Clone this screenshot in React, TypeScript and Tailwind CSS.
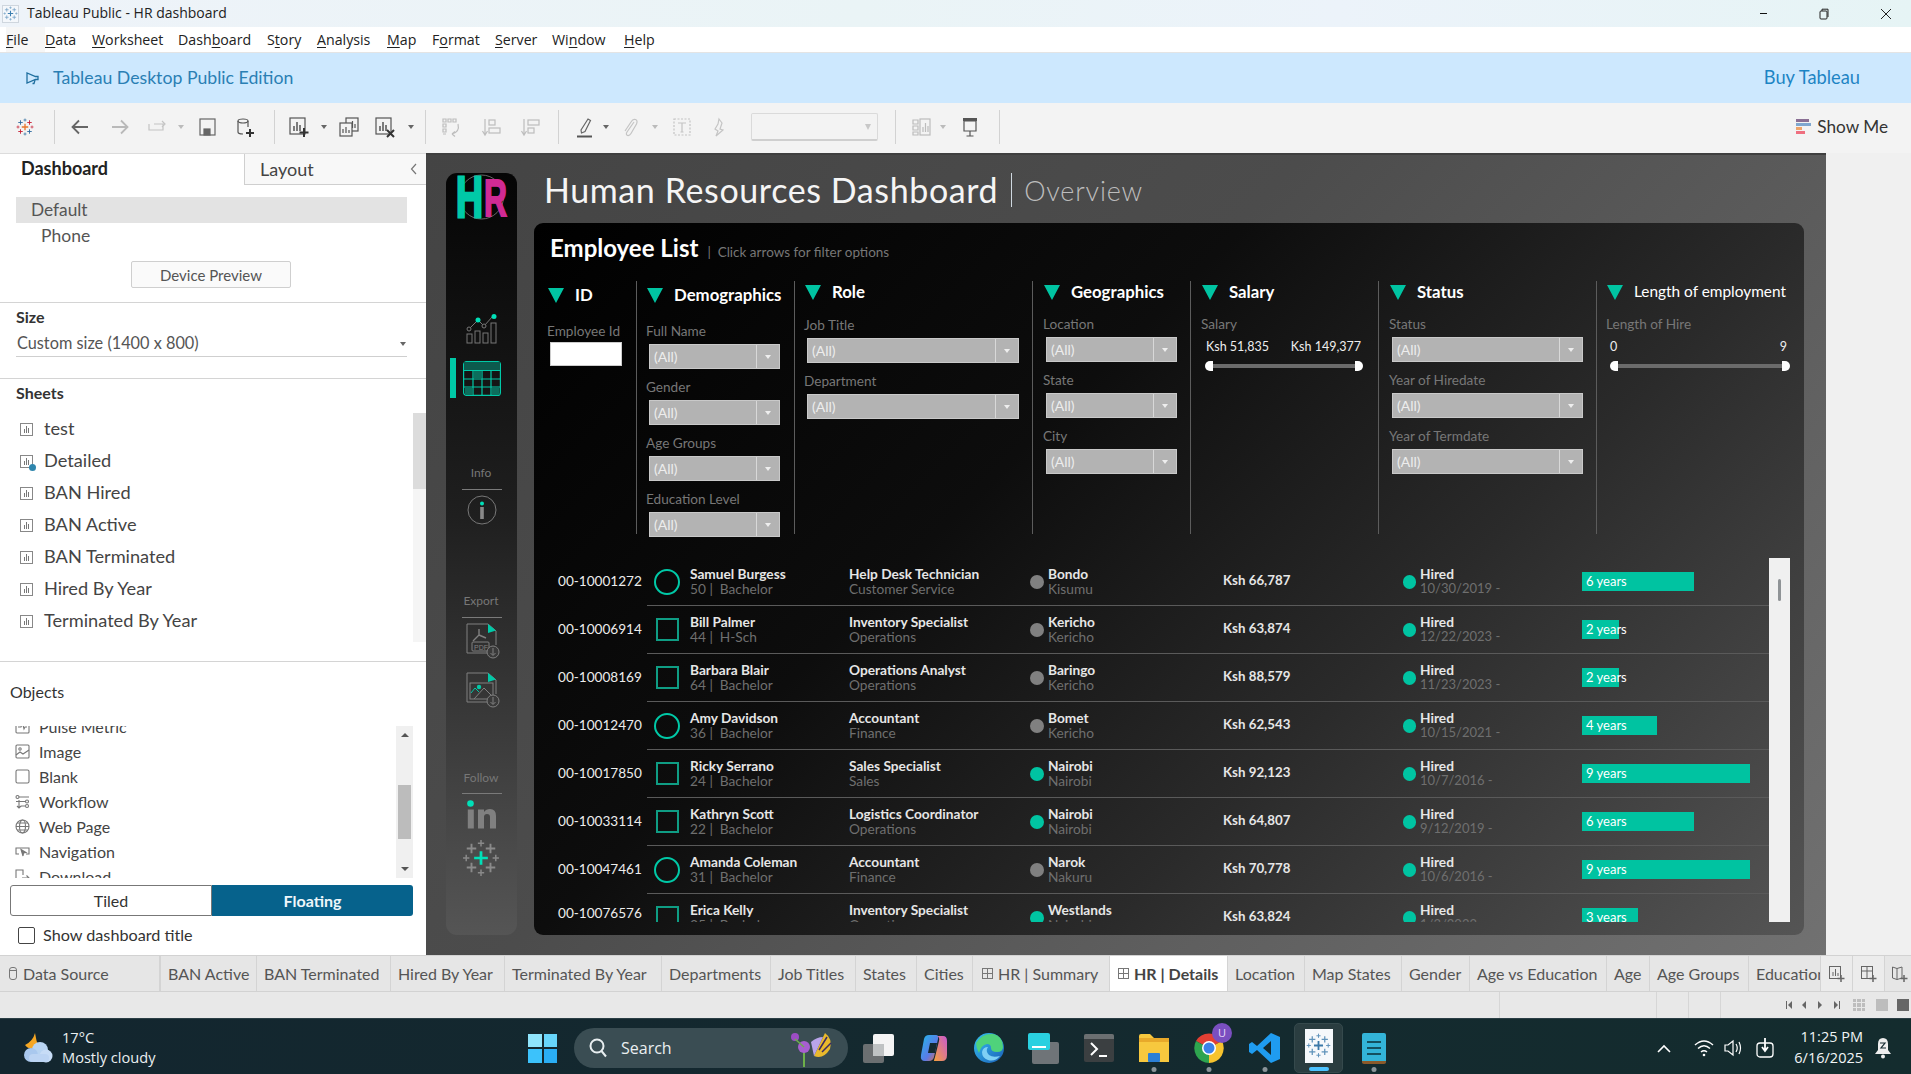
import React from "react";

const Cross = ({ x, y, r, c, w }: { x: number; y: number; r: number; c: string; w: number }) => (
  <path d={`M${x - r} ${y}H${x + r}M${x} ${y - r}V${y + r}`} stroke={c} strokeWidth={w} fill="none" />
);

const TableauMark = ({ size, center, a, b, className }: { size: number; center: string; a: string; b: string; className?: string }) => (
  <svg width={size} height={size} viewBox="0 0 36 36" className={className}>
    <Cross x={18} y={18} r={6.5} c={center} w={2.6} />
    <Cross x={9} y={9} r={4.5} c={a} w={1.8} />
    <Cross x={27} y={9} r={4.5} c={b} w={1.8} />
    <Cross x={9} y={27} r={4.5} c={b} w={1.8} />
    <Cross x={27} y={27} r={4.5} c={a} w={1.8} />
    <Cross x={18} y={4} r={3} c={a} w={1.4} />
    <Cross x={18} y={32} r={3} c={a} w={1.4} />
    <Cross x={4} y={18} r={3} c={b} w={1.4} />
    <Cross x={32} y={18} r={3} c={b} w={1.4} />
  </svg>
);

const Ico = ({ children, c = "#555", w = 22, h = 22, vb = "0 0 22 22" }: { children: React.ReactNode; c?: string; w?: number; h?: number; vb?: string }) => (
  <svg width={w} height={h} viewBox={vb} fill="none" stroke={c} strokeWidth={1.2}>
    {children}
  </svg>
);

const Slot = ({ className = "", children }: { className?: string; children?: React.ReactNode }) => (
  <div className={`w-[22px] h-[22px] flex items-center justify-center shrink-0 ${className}`}>{children}</div>
);
const Drop = ({ className = "", light }: { className?: string; light?: boolean }) => (
  <div className={`w-[8px] flex justify-center shrink-0 ${className}`}>
    <div className={`w-0 h-0 border-l-[3px] border-r-[3px] border-t-[4px] border-l-transparent border-r-transparent ${light ? "border-t-[#bbb]" : "border-t-[#666]"}`} />
  </div>
);
const Sep = ({ className = "" }: { className?: string }) => <div className={`w-px h-[34px] bg-[#d2d2d2] shrink-0 ${className}`} />;

const menus = [
  { a: "", u: "F", b: "ile", w: "w-[39px] bg-[#f6f6f6]" },
  { a: "", u: "D", b: "ata", w: "w-[47px]" },
  { a: "", u: "W", b: "orksheet", w: "w-[86px]" },
  { a: "Dash", u: "b", b: "oard", w: "w-[89px]" },
  { a: "S", u: "t", b: "ory", w: "w-[50px]" },
  { a: "", u: "A", b: "nalysis", w: "w-[70px]" },
  { a: "", u: "M", b: "ap", w: "w-[45px]" },
  { a: "F", u: "o", b: "rmat", w: "w-[63px]" },
  { a: "", u: "S", b: "erver", w: "w-[57px]" },
  { a: "Wi", u: "n", b: "dow", w: "w-[72px]" },
  { a: "", u: "H", b: "elp", w: "w-[50px]" },
];

const TitleBar = () => (
  <div className="h-[27px] flex items-center bg-[linear-gradient(90deg,#eef3f9,#eaf4f6_45%,#ecf3fa_70%,#e6f4f5)] font-['Open_Sans',sans-serif] text-[14px] text-[#222]">
    <div className="ml-[2px] w-[17px] h-[18px] bg-[#f4f7fb] border border-[#cfd6de] flex items-center justify-center">
      <TableauMark size={15} center="#3d7fb0" a="#6f9fc4" b="#6f9fc4" />
    </div>
    <span className="ml-[8px] leading-none mb-[2px]">Tableau Public - HR dashboard</span>
    <div className="ml-auto flex items-center">
      <div className="w-[7px] h-px bg-[#111] mr-[52px]" />
      <svg width="10" height="12" viewBox="0 0 10 12" fill="none" stroke="#222" strokeWidth="1" className="mr-[51px]">
        <rect x="1" y="3" width="7" height="8" rx="1" />
        <path d="M3 3V1.2H9V9" />
      </svg>
      <svg width="12" height="12" viewBox="0 0 12 12" stroke="#222" strokeWidth="1" className="mr-[19px]">
        <path d="M1 1L11 11M11 1L1 11" />
      </svg>
    </div>
  </div>
);

const MenuBar = () => (
  <div className="h-[26px] bg-white border-b border-[#e4e4e4] flex items-center font-['Open_Sans',sans-serif] text-[14.2px] text-[#222]">
    <div className="w-[6px] h-full" />
    {menus.map((m, i) => (
      <div key={i} className={`${m.w} h-full flex items-center whitespace-pre pt-px`}>
        {m.a}
        <u className="underline-offset-2">{m.u}</u>
        {m.b}
      </div>
    ))}
  </div>
);

const Banner = () => (
  <div className="h-[50px] bg-[#cde8fe] flex items-center font-[Lato,sans-serif] text-[17.7px] text-[#2a7fb4]">
    <svg width="14" height="14" viewBox="0 0 14 14" fill="none" stroke="#1f6f9f" strokeWidth="1.3" className="ml-[25px] -scale-x-100">
      <path d="M1 5.5V8.5H3.5L12 12V2L3.5 5.5H1Z" />
      <path d="M4 9L5 12.5H6.5" />
    </svg>
    <span className="ml-[14px]">Tableau Desktop Public Edition</span>
    <span className="ml-auto mr-[51px] text-[#1d84c4] text-[18.3px]">Buy Tableau</span>
  </div>
);

const Toolbar = () => (
  <div className="h-[50px] bg-[#f3f3f3] flex items-center pb-[2px]">
    <Slot className="ml-[14px]">
      <TableauMark size={18} center="#e8762d" a="#2d6a9f" b="#c72035" />
    </Slot>
    <Sep className="ml-[18px]" />
    <Slot className="ml-[14px]">
      <Ico c="#666"><path d="M19 11H4M10 4.5L3.5 11L10 17.5" strokeWidth="1.8" /></Ico>
    </Slot>
    <Slot className="ml-[18px]">
      <Ico c="#b9b9b9"><path d="M3 11H18M12 4.5L18.5 11L12 17.5" strokeWidth="1.8" /></Ico>
    </Slot>
    <Slot className="ml-[15px]">
      <Ico c="#c4c4c4"><path d="M3 8V14H17V8H8M16 5L19 8L16 11" strokeWidth="1.2" /></Ico>
    </Slot>
    <Drop className="ml-[9px]" light />
    <Slot className="ml-[11px]">
      <Ico c="#666"><rect x="4" y="3" width="15" height="16" /><rect x="8" y="13" width="6" height="6" fill="#666" /></Ico>
    </Slot>
    <Slot className="ml-[16px]">
      <Ico c="#555"><ellipse cx="9" cy="5" rx="5" ry="2" /><path d="M4 5V16Q4 18 9 18M14 5V11" /><path d="M16 13V21M12 17H20" stroke="#333" strokeWidth="2" /></Ico>
    </Slot>
    <Sep className="ml-[18px]" />
    <Slot className="ml-[13px]">
      <Ico c="#555"><rect x="2" y="2" width="15" height="16" /><path d="M6 15V10M9 15V6M12 15V9" strokeWidth="1.5" /><path d="M16 12V21M11.5 16.5H20.5" stroke="#333" strokeWidth="2" /></Ico>
    </Slot>
    <Drop className="ml-[10px]" />
    <Slot className="ml-[10px]">
      <Ico c="#555"><rect x="8" y="2" width="12" height="13" /><path d="M12 12V8M14.5 12V5M17 12V8" /><rect x="2" y="7" width="12" height="13" fill="#f3f3f3" /><path d="M5 17V13M8 17V11M11 17V14" /></Ico>
    </Slot>
    <Slot className="ml-[14px]">
      <Ico c="#555"><rect x="2" y="2" width="15" height="16" /><path d="M6 15V10M9 15V6M12 15V9" strokeWidth="1.5" /><path d="M13 14L20 21M20 14L13 21" stroke="#333" strokeWidth="2" /></Ico>
    </Slot>
    <Drop className="ml-[11px]" />
    <Sep className="ml-[10px]" />
    <Slot className="ml-[14px]">
      <Ico c="#bdbdbd"><path d="M3 3H6V6H3ZM8 3H11V6H8ZM13 3H16V6H13ZM3 8H6V11H3ZM3 13H6V16H3ZM3 18H6" /><path d="M18 8Q20 16 12 18M12 18L15 15.5M12 18L15 20.5" /></Ico>
    </Slot>
    <Slot className="ml-[18px]">
      <Ico c="#bdbdbd"><path d="M5 3V18M2.5 15L5 19L7.5 15" /><rect x="9" y="4" width="6" height="5" /><rect x="9" y="12" width="11" height="5" /></Ico>
    </Slot>
    <Slot className="ml-[17px]">
      <Ico c="#bdbdbd"><path d="M5 3V18M2.5 15L5 19L7.5 15" /><rect x="9" y="4" width="11" height="5" /><rect x="9" y="12" width="6" height="5" /></Ico>
    </Slot>
    <Sep className="ml-[17px]" />
    <Slot className="ml-[15px]">
      <Ico c="#666"><path d="M7 14L14 3L16.5 4.5L11 15.5L7.5 17Z" /><path d="M3 20.5H18" stroke="#555" strokeWidth="2" /></Ico>
    </Slot>
    <Drop className="ml-[6px]" />
    <Slot className="ml-[9px]">
      <Ico c="#c4c4c4"><path d="M15 6L8 16Q6.5 18.5 8.5 19.5Q10.5 20 12 17.5L17.5 8Q19 4.5 16.5 3.5Q14 2.5 12 6L6 15" /></Ico>
    </Slot>
    <Drop className="ml-[10px]" light />
    <Slot className="ml-[12px]">
      <Ico c="#c4c4c4"><rect x="3" y="3" width="16" height="16" strokeDasharray="2 1.5" /><path d="M7 7H15M11 7V16M9.5 16H12.5" /></Ico>
    </Slot>
    <Slot className="ml-[15px]">
      <Ico c="#c4c4c4"><path d="M11 3L14 7L12 13L15 14L8 20L10 15L7 13L10 8Z" /></Ico>
    </Slot>
    <div className="ml-[21px] w-[127px] h-[28px] border border-[#dadada] border-b-2 border-b-[#cfcfcf] rounded-[2px] flex items-center justify-end pr-[6px]">
      <div className="w-0 h-0 border-l-[3.5px] border-r-[3.5px] border-t-[6px] border-l-transparent border-r-transparent border-t-[#c8c8c8]" />
    </div>
    <Sep className="ml-[17px]" />
    <Slot className="ml-[15px]">
      <Ico c="#bcbcbc"><path d="M2 4H7V8H2ZM2 10H7V14H2ZM2 16H7V19H2Z" /><rect x="9" y="3" width="10" height="16" /><path d="M12 16V11M14.5 16V7M17 16V10" /></Ico>
    </Slot>
    <Drop className="ml-[6px]" light />
    <Slot className="ml-[12px]">
      <Ico c="#555"><path d="M5 5H17V15H5Z" /><path d="M4 3.5H18" stroke="#555" strokeWidth="3" /><path d="M11 15V20M7.5 20H14.5" /></Ico>
    </Slot>
    <Sep className="ml-[18px]" />
    <div className="ml-auto mr-[23px] flex items-center">
      <div className="flex flex-col w-[15px] gap-px">
        <div className="h-[3px] w-[13px] bg-[#8a6f94]" />
        <div className="h-[3px] w-[15px] bg-[#7fa7cf]" />
        <div className="h-[3px] w-[6px] bg-[#eda46a]" />
        <div className="h-[3px] w-[9px] bg-[#ef6f7f]" />
      </div>
      <span className="ml-[6px] font-[Lato,sans-serif] text-[17.2px] text-[#333]">Show Me</span>
    </div>
  </div>
);

const SheetIcon = ({ check }: { check?: boolean }) => (
  <div className="relative w-[13px] h-[13px] border border-[#888] bg-white flex items-end justify-center gap-px pb-[2px] shrink-0">
    <div className="w-px h-[4px] bg-[#777]" />
    <div className="w-px h-[7px] bg-[#777]" />
    <div className="w-px h-[5px] bg-[#777]" />
    {check && <div className="absolute -right-[4px] -bottom-[4px] w-[7px] h-[7px] rounded-full bg-[#2f86ad]" />}
  </div>
);

const sheets = ["test", "Detailed", "BAN Hired", "BAN Active", "BAN Terminated", "Hired By Year", "Terminated By Year"];

const ObjIcon = ({ kind }: { kind: string }) => (
  <svg width="15" height="15" viewBox="0 0 15 15" fill="none" stroke="#777" strokeWidth="1.1" className="shrink-0">
    {kind === "pulse" && <><rect x="1" y="1" width="13" height="13" rx="1" /><path d="M3 8H6L7.5 4L9 10L10 8H12" /></>}
    {kind === "image" && <><rect x="1" y="1" width="13" height="13" rx="1" /><circle cx="5" cy="5" r="1.2" /><path d="M1 11L5 8L8 10L14 6" /></>}
    {kind === "blank" && <rect x="1" y="1" width="13" height="13" rx="1.5" />}
    {kind === "flow" && <><circle cx="2.5" cy="3" r="1.5" /><circle cx="12" cy="7.5" r="1.5" /><circle cx="12" cy="12" r="1.5" /><path d="M4 3H14M1 7.5H10M6 12H10M4 6V14M2 12L4 14L6 12" /></>}
    {kind === "web" && <><circle cx="7.5" cy="7.5" r="6.5" /><ellipse cx="7.5" cy="7.5" rx="3" ry="6.5" /><path d="M1 7.5H14M2 4H13M2 11H13" /></>}
    {kind === "nav" && <><path d="M4 10H1V4H14V10H11" /><path d="M6 5.5L11 8.5L8.5 9L8 12Z" fill="#777" /></>}
    {kind === "down" && <><path d="M8 14H1V1H8V6" /><path d="M7 9H14M11.5 6.5L14 9L11.5 11.5" /></>}
  </svg>
);

const objects = [
  { k: "pulse", t: "Pulse Metric" },
  { k: "image", t: "Image" },
  { k: "blank", t: "Blank" },
  { k: "flow", t: "Workflow" },
  { k: "web", t: "Web Page" },
  { k: "nav", t: "Navigation" },
  { k: "down", t: "Download" },
];

const LeftPanel = () => (
  <div className="w-[426px] shrink-0 h-full bg-white flex flex-col border-t border-[#dcdcdc] font-[Lato,sans-serif] text-[#444] overflow-hidden">
    <div className="h-[31px] flex shrink-0">
      <div className="w-[244px] pl-[21px] pb-[2px] flex items-center font-bold text-[18px] text-[#222]">Dashboard</div>
      <div className="flex-1 bg-[#f8f8f8] border-l border-b border-[#cfcfcf] flex items-center pl-[15px] text-[18px] text-[#444]">
        Layout
        <svg width="8" height="12" viewBox="0 0 8 12" fill="none" stroke="#777" strokeWidth="1.2" className="ml-auto mr-[8px]"><path d="M6 1L1.5 6L6 11" /></svg>
      </div>
    </div>
    <div className="mt-[12px] ml-[16px] w-[391px] h-[26px] bg-[#e3e3e3] flex items-center pl-[15px] text-[17.3px] text-[#555] shrink-0">Default</div>
    <div className="ml-[41px] h-[26px] flex items-center text-[17.5px] text-[#555] shrink-0">Phone</div>
    <div className="mt-[12px] ml-[131px] w-[160px] h-[27px] pt-px bg-[#fafafa] border border-[#cfcfcf] rounded-[2px] flex items-center justify-center text-[15px] text-[#555] shrink-0">Device Preview</div>
    <div className="mt-[14px] h-px bg-[#d4d4d4] shrink-0" />
    <div className="mt-[3px] ml-[16px] h-[22px] flex items-center font-bold text-[16px] text-[#333] shrink-0">Size</div>
    <div className="mt-[4px] ml-[16px] w-[391px] h-[25px] pb-px border-b border-[#cfcfcf] flex items-center text-[16.3px] text-[#555] shrink-0">
      <span className="ml-px">Custom size (1400 x 800)</span>
      <div className="ml-auto mr-[1px] w-0 h-0 border-l-[3.5px] border-r-[3.5px] border-t-[4px] border-l-transparent border-r-transparent border-t-[#666]" />
    </div>
    <div className="mt-[21px] h-px bg-[#d4d4d4] shrink-0" />
    <div className="mt-[3px] ml-[16px] h-[22px] flex items-center font-bold text-[16px] text-[#333] shrink-0">Sheets</div>
    <div className="mt-[9px] h-[229px] flex shrink-0">
      <div className="flex-1 flex flex-col">
        {sheets.map((s, i) => (
          <div key={s} className="h-[32px] flex items-center pl-[20px]">
            <SheetIcon check={i === 1} />
            <span className="ml-[11px] text-[18.2px] text-[#444]">{s}</span>
          </div>
        ))}
      </div>
      <div className="w-[13px] bg-[#f5f5f5]">
        <div className="h-[76px] bg-[#dcdcdc]" />
      </div>
    </div>
    <div className="mt-[19px] h-px bg-[#d4d4d4] shrink-0" />
    <div className="mt-[19px] ml-[10px] h-[22px] flex items-center font-normal text-[16px] text-[#333] shrink-0">Objects</div>
    <div className="mt-[23px] h-[152px] flex shrink-0">
      <div className="w-[396px] h-[152px] overflow-hidden flex flex-col">
        <div className="-mt-[12px]" />
        {objects.map((o) => (
          <div key={o.k} className="h-[25px] flex items-center pl-[15px] shrink-0">
            <ObjIcon kind={o.k} />
            <span className="ml-[9px] text-[16px] text-[#444]">{o.t}</span>
          </div>
        ))}
      </div>
      <div className="w-[17px] bg-[#f0f0f0] flex flex-col items-center">
        <div className="mt-[7px] w-0 h-0 border-l-[4px] border-r-[4px] border-b-[4px] border-l-transparent border-r-transparent border-b-[#555]" />
        <div className="mt-[48px] w-[13px] h-[54px] bg-[#bcbcbc]" />
        <div className="mt-[28px] w-0 h-0 border-l-[4px] border-r-[4px] border-t-[4px] border-l-transparent border-r-transparent border-t-[#555]" />
      </div>
    </div>
    <div className="mt-[7px] ml-[10px] w-[403px] h-[31px] flex shrink-0">
      <div className="w-[202px] border border-[#777] rounded-l-[3px] flex items-center justify-center text-[16px] text-[#333]">Tiled</div>
      <div className="flex-1 bg-[#06628c] rounded-r-[3px] flex items-center justify-center text-[16px] font-bold text-[#eef6fa]">Floating</div>
    </div>
    <div className="mt-[7px] ml-[18px] flex items-center shrink-0">
      <div className="w-[17px] h-[17px] border border-[#444] rounded-[2px]" />
      <span className="ml-[8px] text-[16.2px] text-[#333]">Show dashboard title</span>
    </div>
  </div>
);

const SideLabel = ({ t, className }: { t: string; className: string }) => (
  <div className={`h-[16px] flex items-center justify-center text-[12px] text-[#777] ${className}`}>{t}</div>
);
const SideLine = ({ className }: { className: string }) => <div className={`mx-auto w-[40px] h-px bg-[#7a7a7a] ${className}`} />;

const Sidebar = () => (
  <div className="w-[71px] h-[762px] shrink-0 rounded-[11px] bg-[linear-gradient(180deg,#050505,#1f1f1f_45%,#555_100%)] flex flex-col items-stretch">
    <svg width="71" height="48" viewBox="0 0 71 48" className="mt-[1px] shrink-0">
      <circle cx="35.5" cy="23" r="22" fill="none" stroke="#666" strokeWidth="1" />
      <text x="10" y="43" fontFamily="'Liberation Sans',sans-serif" fontWeight="700" fontSize="58" fill="#00c9a7" stroke="#00c9a7" strokeWidth="3" textLength="27" lengthAdjust="spacingAndGlyphs">H</text>
      <text x="38" y="42" fontFamily="'Liberation Sans',sans-serif" fontWeight="700" fontSize="52" fill="#d02a94" stroke="#d02a94" strokeWidth="2" textLength="23" lengthAdjust="spacingAndGlyphs">R</text>
    </svg>
    <svg width="32" height="30" viewBox="0 0 32 30" fill="none" stroke="#777" strokeWidth="1" className="mt-[92px] ml-[20px] shrink-0">
      <rect x="1" y="20" width="5" height="9" />
      <rect x="9" y="17" width="5" height="12" />
      <rect x="17" y="19" width="5" height="10" />
      <rect x="25" y="9" width="5" height="20" />
      <path d="M3 15L12 6L18 12L27 2" />
      <circle cx="3" cy="15" r="2" fill="#111" />
      <circle cx="18" cy="12" r="2" fill="#111" />
      <circle cx="12" cy="6" r="2.5" fill="#00e0b8" stroke="none" />
      <circle cx="28" cy="2.5" r="2.5" fill="#00e0b8" stroke="none" />
    </svg>
    <div className="mt-[14px] h-[40px] flex items-center shrink-0">
      <div className="ml-[4px] w-[6px] h-[40px] bg-[#00c9a7]" />
      <svg width="38" height="35" viewBox="0 0 38 35" fill="none" stroke="#00c9a7" strokeWidth="1.2" className="ml-[7px]">
        <rect x="0.6" y="0.6" width="36.8" height="33.8" rx="3" />
        <rect x="1" y="1" width="36" height="8" fill="#0c5a4d" stroke="none" />
        <path d="M1 9.5H37M1 18H37M1 26H37M10 9.5V34M19 9.5V34M28 9.5V34" />
        <rect x="11" y="10" width="7.5" height="7.5" fill="#0c6e5d" stroke="none" />
        <rect x="2" y="27" width="7.5" height="7" fill="#0c6e5d" stroke="none" />
        <rect x="29" y="27" width="7.5" height="7" fill="#0c6e5d" stroke="none" />
      </svg>
    </div>
    <SideLabel t="Info" className="mt-[67px] shrink-0 pr-px" />
    <SideLine className="mt-[8px] shrink-0" />
    <svg width="30" height="30" viewBox="0 0 30 30" fill="none" className="mt-[5px] mx-auto shrink-0">
      <circle cx="15" cy="15" r="14" stroke="#777" strokeWidth="1" />
      <circle cx="15" cy="8.5" r="2" fill="#00e0b8" />
      <rect x="13.2" y="12" width="3.6" height="12" fill="#888" />
    </svg>
    <SideLabel t="Export" className="mt-[68px] shrink-0 pr-px" />
    <SideLine className="mt-[8px] shrink-0" />
    <svg width="34" height="36" viewBox="0 0 34 36" fill="none" stroke="#808080" strokeWidth="1" className="mt-[5px] ml-[20px] shrink-0">
      <path d="M23 30H1V1H22L30 8V22" />
      <path d="M22 1L30 7.5L22 10Z" fill="#00c9a7" stroke="none" />
      <path d="M13 6V12L7 18M13 12L20 15" strokeWidth="1.4" />
      <rect x="6" y="19" width="17" height="9" rx="1" />
      <text x="8" y="27" fontSize="7" fontFamily="'Liberation Sans',sans-serif" stroke="none" fill="#808080">PDF</text>
      <circle cx="27" cy="29" r="6" fill="#3a3a3a" />
      <path d="M27 25V32M24.5 30L27 32.5L29.5 30" />
    </svg>
    <svg width="34" height="36" viewBox="0 0 34 36" fill="none" stroke="#808080" strokeWidth="1" className="mt-[13px] ml-[20px] shrink-0">
      <path d="M23 30H1V1H22L30 8V22" />
      <path d="M22 1L30 7.5L22 10Z" fill="#00c9a7" stroke="none" />
      <rect x="4" y="11" width="23" height="16" />
      <circle cx="13" cy="15" r="2.2" fill="#00c9a7" stroke="none" />
      <path d="M5 21L9 16L13 20" stroke="#00c9a7" />
      <path d="M8 27L18 16L27 25" />
      <circle cx="27" cy="29" r="6" fill="#3a3a3a" />
      <path d="M27 25V32M24.5 30L27 32.5L29.5 30" />
    </svg>
    <SideLabel t="Follow" className="mt-[62px] shrink-0 pr-px" />
    <SideLine className="mt-[7px] shrink-0" />
    <svg width="30" height="29" viewBox="0 0 30 29" className="mt-[6px] ml-[21px] shrink-0">
      <circle cx="3.5" cy="3.5" r="3.3" fill="#00e0b8" />
      <rect x="0.8" y="9.5" width="6" height="19" fill="#808080" />
      <path d="M11 9.5H17V12Q19 9 23 9Q29 9 29 16V28.5H23V17Q23 14 20 14Q17 14 17 17V28.5H11Z" fill="#808080" />
    </svg>
    <TableauMark size={38} center="#00e0b8" a="#8a8a8a" b="#8a8a8a" className="mt-[10px] ml-[16px] shrink-0" />
  </div>
);

const Tri = () => <div className="w-0 h-0 border-l-[8px] border-r-[8px] border-t-[15px] border-l-transparent border-r-transparent border-t-[#00c4a2] shrink-0" />;

const Head = ({ t, className = "", small }: { t: string; className?: string; small?: boolean }) => (
  <div className={`h-[22px] flex items-center ml-px ${className}`}>
    <Tri />
    <span className={`ml-[11px] whitespace-nowrap text-white ${small ? "text-[15.4px]" : "text-[16.8px] font-bold"}`}>{t}</span>
  </div>
);

const Sel = ({ w }: { w: string }) => (
  <div className={`ml-[3px] mt-[4px] h-[25px] bg-[#b3b3b3] border border-[#c9c9c9] flex items-center pl-[4px] text-[14px] text-[#ededed] ${w}`}>
    (All)
    <div className="ml-auto w-[23px] h-full border-l border-[#d8d8d8] flex items-center justify-center">
      <div className="w-0 h-0 border-l-[3.5px] border-r-[3.5px] border-t-[4px] border-l-transparent border-r-transparent border-t-[#eee]" />
    </div>
  </div>
);
const Lbl = ({ t }: { t: string }) => <div className="h-[16px] pb-[2px] flex items-center text-[13.6px] text-[#777] whitespace-nowrap">{t}</div>;

const Group = ({ items, w, className }: { items: string[]; w: string; className: string }) => (
  <div className={`flex flex-col gap-[11px] ${className}`}>
    {items.map((t) => (
      <div key={t}>
        <Lbl t={t} />
        <Sel w={w} />
      </div>
    ))}
  </div>
);

const Slider = ({ className }: { className: string }) => (
  <div className={`flex items-center h-[10px] ${className}`}>
    <div className="w-[8px] h-[10px] rounded-l-full bg-white" />
    <div className="flex-1 h-[4px] bg-[#6b6b6b]" />
    <div className="w-[8px] h-[10px] rounded-r-full bg-white" />
  </div>
);

const Filters = () => (
  <div className="mt-[20px] h-[257px] flex shrink-0 text-white">
    <div className="w-[102px] h-[253px] pl-[13px] pt-[3px] shrink-0">
      <Head t="ID" />
      <div className="mt-[18px]"><Lbl t="Employee Id" /></div>
      <div className="ml-[3px] mt-[2px] w-[72px] h-[24px] bg-white border border-[#ccc]" />
    </div>
    <div className="w-[158px] h-[253px] border-l border-[#5c5c5c] pl-[9px] pt-[3px] shrink-0">
      <Head t="Demographics" />
      <Group className="mt-[18px]" w="w-[131px]" items={["Full Name", "Gender", "Age Groups", "Education Level"]} />
    </div>
    <div className="w-[238px] h-[253px] border-l border-[#5c5c5c] pl-[9px] shrink-0">
      <Head t="Role" />
      <Group className="mt-[15px]" w="w-[212px]" items={["Job Title", "Department"]} />
    </div>
    <div className="w-[158px] h-[253px] border-l border-[#5c5c5c] pl-[10px] shrink-0">
      <Head t="Geographics" />
      <Group className="mt-[14px]" w="w-[131px]" items={["Location", "State", "City"]} />
    </div>
    <div className="w-[188px] h-[253px] border-l border-[#5c5c5c] pl-[10px] shrink-0">
      <Head t="Salary" />
      <div className="mt-[14px]"><Lbl t="Salary" /></div>
      <div className="mt-[6px] ml-[5px] w-[155px] h-[16px] flex items-center justify-between text-[12.5px] text-[#eee]">
        <span>Ksh 51,835</span>
        <span>Ksh 149,377</span>
      </div>
      <Slider className="mt-[6px] ml-[4px] w-[158px]" />
    </div>
    <div className="w-[218px] h-[253px] border-l border-[#5c5c5c] pl-[10px] shrink-0">
      <Head t="Status" />
      <Group className="mt-[14px]" w="w-[191px]" items={["Status", "Year of Hiredate", "Year of Termdate"]} />
    </div>
    <div className="w-[208px] h-[253px] border-l border-[#5c5c5c] pl-[9px] shrink-0">
      <Head t="Length of employment" small />
      <div className="mt-[14px]"><Lbl t="Length of Hire" /></div>
      <div className="mt-[6px] ml-[4px] w-[177px] h-[16px] flex items-center justify-between text-[12.5px] text-[#eee]">
        <span>0</span>
        <span>9</span>
      </div>
      <Slider className="mt-[6px] ml-[4px] w-[180px]" />
    </div>
  </div>
);

type Row = {
  id: string; round: boolean; name: string; age: string; edu: string; job: string; dept: string;
  loc: string; sub: string; on: boolean; sal: string; date: string; yrs: number; bar: string;
};
const rows: Row[] = [
  { id: "00-10001272", round: true, name: "Samuel Burgess", age: "50", edu: "Bachelor", job: "Help Desk Technician", dept: "Customer Service", loc: "Bondo", sub: "Kisumu", on: false, sal: "Ksh 66,787", date: "10/30/2019 -", yrs: 6, bar: "w-[112px]" },
  { id: "00-10006914", round: false, name: "Bill Palmer", age: "44", edu: "H-Sch", job: "Inventory Specialist", dept: "Operations", loc: "Kericho", sub: "Kericho", on: false, sal: "Ksh 63,874", date: "12/22/2023 -", yrs: 2, bar: "w-[37px]" },
  { id: "00-10008169", round: false, name: "Barbara Blair", age: "64", edu: "Bachelor", job: "Operations Analyst", dept: "Operations", loc: "Baringo", sub: "Kericho", on: false, sal: "Ksh 88,579", date: "11/23/2023 -", yrs: 2, bar: "w-[37px]" },
  { id: "00-10012470", round: true, name: "Amy Davidson", age: "36", edu: "Bachelor", job: "Accountant", dept: "Finance", loc: "Bomet", sub: "Kericho", on: false, sal: "Ksh 62,543", date: "10/15/2021 -", yrs: 4, bar: "w-[75px]" },
  { id: "00-10017850", round: false, name: "Ricky Serrano", age: "24", edu: "Bachelor", job: "Sales Specialist", dept: "Sales", loc: "Nairobi", sub: "Nairobi", on: true, sal: "Ksh 92,123", date: "10/7/2016 -", yrs: 9, bar: "w-[168px]" },
  { id: "00-10033114", round: false, name: "Kathryn Scott", age: "22", edu: "Bachelor", job: "Logistics Coordinator", dept: "Operations", loc: "Nairobi", sub: "Nairobi", on: true, sal: "Ksh 64,807", date: "9/12/2019 -", yrs: 6, bar: "w-[112px]" },
  { id: "00-10047461", round: true, name: "Amanda Coleman", age: "31", edu: "Bachelor", job: "Accountant", dept: "Finance", loc: "Narok", sub: "Nakuru", on: false, sal: "Ksh 70,778", date: "10/6/2016 -", yrs: 9, bar: "w-[168px]" },
  { id: "00-10076576", round: false, name: "Erica Kelly", age: "35", edu: "Bachelor", job: "Inventory Specialist", dept: "Operations", loc: "Westlands", sub: "Nairobi", on: true, sal: "Ksh 63,824", date: "1/3/2022 -", yrs: 3, bar: "w-[56px]" },
];

const Two = ({ a, b, className, subClass = "text-[13.7px]" }: { a: string; b: string; className: string; subClass?: string }) => (
  <div className={`flex flex-col mb-[2px] shrink-0 ${className}`}>
    <span className="h-[15px] leading-[15px] text-[13.7px] font-bold text-[#e6e6e6] whitespace-nowrap">{a}</span>
    <span className={`h-[15px] leading-[15px] text-[#6f6f6f] whitespace-pre ${subClass}`}>{b}</span>
  </div>
);

const TableRow = ({ r, last }: { r: Row; last: boolean }) => (
  <div className="h-[48px] flex items-center shrink-0">
    <div className={`w-[113px] pl-[24px] text-[13.6px] text-[#ececec] shrink-0 ${last ? "pb-[9px]" : "pb-px"}`}>{r.id}</div>
    <div className="flex-1 h-full flex items-center border-b border-[#5a5a5a]">
      <div className="w-[43px] pl-[7px] shrink-0">
        {r.round ? (
          <div className="w-[26px] h-[26px] rounded-full border-2 border-[#00c9a7]" />
        ) : (
          <div className="ml-[2px] w-[23px] h-[23px] border-2 border-[#0f9d84]" />
        )}
      </div>
      <Two className="w-[159px]" a={r.name} b={`${r.age} |  ${r.edu}`} />
      <Two className="w-[181px]" a={r.job} b={r.dept} />
      <div className={`w-[14px] h-[14px] rounded-full mr-[4px] shrink-0 ${r.on ? "bg-[#00c4a2]" : "bg-[#808080]"}`} />
      <Two className="w-[175px]" a={r.loc} b={r.sub} />
      <div className="w-[180px] pb-px text-[13.3px] font-bold text-[#e6e6e6] shrink-0">{r.sal}</div>
      <div className="w-[13px] h-[14px] rounded-full bg-[#00c4a2] mr-[4px] shrink-0" />
      <Two className="w-[162px]" a="Hired" b={r.date} subClass="text-[13px]" />
      <div className="relative h-[19px] flex-1">
        <div className={`h-full bg-[#00c3a1] ${r.bar}`} />
        <span className="absolute left-[4px] top-0 leading-[19px] text-[13px] text-white">{r.yrs} years</span>
      </div>
    </div>
  </div>
);

const Card = () => (
  <div className="w-[1270px] h-[712px] rounded-[9px] bg-[linear-gradient(135deg,#000_0%,#0d0d0d_36%,#2a2a2a_64%,#555_100%)] flex flex-col overflow-hidden">
    <div className="mt-[12px] h-[26px] pl-[16px] flex items-baseline shrink-0 whitespace-pre">
      <span className="text-[24px] font-bold text-white leading-[26px]">Employee List</span>
      <span className="ml-[9px] text-[13.5px] text-[#777]">|  Click arrows for filter options</span>
    </div>
    <Filters />
    <div className="mt-[20px] h-[364px] flex shrink-0 overflow-hidden">
      <div className="w-[1235px] flex flex-col">
        {rows.map((r, i) => (
          <TableRow key={r.id} r={r} last={i === rows.length - 1} />
        ))}
      </div>
      <div className="w-[21px] bg-[#f0f0f0] shrink-0 pl-[9px] pt-[21px]">
        <div className="w-[3px] h-[22px] rounded-full bg-[#8f9396]" />
      </div>
    </div>
  </div>
);

const Canvas = () => (
  <div className="w-[1400px] h-full shrink-0 flex pl-[20px] pt-[20px] gap-[17px] border-t-2 border-[#3f3f3f] bg-[linear-gradient(135deg,#444_0%,#4c4c4c_40%,#717171_100%)] font-[Lato,sans-serif]">
    <div className="-mt-[2px]"><Sidebar /></div>
    <div className="flex flex-col -mt-[2px]">
      <div className="h-[50px] pb-[17px] flex items-center whitespace-nowrap shrink-0">
        <span className="ml-[10px] text-[34px] tracking-[0.6px] text-[#f5f5f5] leading-none">Human Resources Dashboard</span>
        <div className="ml-[13px] w-px h-[34px] bg-[#cfd8e0]" />
        <span className="ml-[12px] text-[27px] text-[#bdbdbd] tracking-[0.8px] font-light mt-[3px]">Overview</span>
      </div>
      <Card />
    </div>
  </div>
);

const tabs = [
  { t: "BAN Active", w: "w-[96px]" },
  { t: "BAN Terminated", w: "w-[134px]" },
  { t: "Hired By Year", w: "w-[114px]" },
  { t: "Terminated By Year", w: "w-[157px]" },
  { t: "Departments", w: "w-[109px]" },
  { t: "Job Titles", w: "w-[85px]" },
  { t: "States", w: "w-[61px]" },
  { t: "Cities", w: "w-[56px]" },
];
const tabs2 = [
  { t: "Location", w: "w-[77px]" },
  { t: "Map States", w: "w-[97px]" },
  { t: "Gender", w: "w-[68px]" },
  { t: "Age vs Education", w: "w-[137px]" },
  { t: "Age", w: "w-[43px]" },
  { t: "Age Groups", w: "w-[99px]" },
];
const GridG = () => (
  <div className="w-[11px] h-[11px] border border-[#777] grid grid-cols-2 shrink-0">
    <div className="border-r border-b border-[#777]" />
    <div className="border-b border-[#777]" />
    <div className="border-r border-[#777]" />
    <div />
  </div>
);
const TabCell = ({ className = "", children }: { className?: string; children: React.ReactNode }) => (
  <div className={`h-full flex items-center border-r border-[#d4d4d4] shrink-0 whitespace-nowrap ${className}`}>{children}</div>
);

const Tabs = () => (
  <div className="h-[37px] bg-[#e6e6e6] border-t border-b border-[#d2d2d2] flex items-center font-[Lato,sans-serif] text-[16px] text-[#555] overflow-hidden">
    <TabCell className="w-[161px] pl-[9px] border-r-2">
      <svg width="8" height="13" viewBox="0 0 8 13" fill="none" stroke="#777" strokeWidth="1"><rect x="0.5" y="0.5" width="7" height="12" rx="2.5" /><path d="M1 3.5H7" /></svg>
      <span className="ml-[6px]">Data Source</span>
    </TabCell>
    {tabs.map((t) => (
      <TabCell key={t.t} className={`${t.w} pl-[7px]`}>{t.t}</TabCell>
    ))}
    <TabCell className="w-[137px] pl-[9px]">
      <GridG />
      <span className="ml-[5px]">HR | Summary</span>
    </TabCell>
    <TabCell className="w-[118px] pl-[8px] bg-white font-bold text-[#444]">
      <GridG />
      <span className="ml-[5px] font-bold">HR | Details</span>
    </TabCell>
    {tabs2.map((t) => (
      <TabCell key={t.t} className={`${t.w} pl-[7px]`}>{t.t}</TabCell>
    ))}
    <TabCell className="w-[72px] pl-[7px] overflow-hidden">Education</TabCell>
    <TabCell className="w-[32px] justify-center bg-[#ececec]">
      <svg width="18" height="18" viewBox="0 0 18 18" fill="none" stroke="#666"><rect x="1.5" y="1.5" width="11" height="12" /><path d="M5 11V7M7.5 11V4M10 11V8" /><path d="M13 10V17M9.5 13.5H16.5" strokeWidth="1.5" /></svg>
    </TabCell>
    <TabCell className="w-[32px] justify-center bg-[#ececec]">
      <svg width="18" height="18" viewBox="0 0 18 18" fill="none" stroke="#666"><rect x="1.5" y="1.5" width="11" height="12" /><path d="M1.5 6H12.5M7 1.5V13.5" /><path d="M13 10V17M9.5 13.5H16.5" strokeWidth="1.5" /></svg>
    </TabCell>
    <div className="w-[26px] h-full flex items-center pl-[6px] shrink-0">
      <svg width="18" height="18" viewBox="0 0 18 18" fill="none" stroke="#666"><path d="M1.5 2L6 3.5L11 2V13L6 14.5L1.5 13ZM6 3.5V14.5" /><path d="M13 10V17M9.5 13.5H16.5" strokeWidth="1.5" /></svg>
    </div>
  </div>
);

const StatusBar = () => (
  <div className="h-[26px] bg-[#e8e8e8] flex items-center">
    <div className="ml-[1499px] w-px h-full bg-[#d6d6d6]" />
    <div className="ml-[156px] w-px h-full bg-[#d6d6d6]" />
    <div className="ml-[31px] w-px h-full bg-[#d6d6d6]" />
    <div className="ml-[31px] w-px h-full bg-[#d6d6d6]" />
    <svg width="56" height="10" viewBox="0 0 56 10" fill="#666" className="ml-[64px] shrink-0">
      <path d="M1 1H2V9H1ZM7 1V9L3 5Z" />
      <path d="M21 1V9L17 5Z" />
      <path d="M33 1V9L37 5Z" />
      <path d="M49 1V9L53 5ZM54 1H55V9H54Z" />
    </svg>
    <div className="ml-[12px] w-[12px] h-[12px] grid grid-cols-3 gap-px shrink-0">
      {[0, 1, 2, 3, 4, 5, 6, 7, 8].map((i) => <div key={i} className="bg-[#bdbdbd]" />)}
    </div>
    <div className="ml-[11px] w-[12px] h-[12px] bg-[#bdbdbd] shrink-0" />
    <div className="ml-[9px] w-[12px] h-[12px] bg-[#666] shrink-0" />
  </div>
);

const Dot = ({ active }: { active?: boolean }) =>
  active ? (
    <div className="absolute left-1/2 -translate-x-1/2 bottom-[1px] w-[20px] h-[4px] rounded-full bg-[#4cc2ff]" />
  ) : (
    <div className="absolute left-1/2 -translate-x-1/2 bottom-[1px] w-[5px] h-[5px] rounded-full bg-[#8a9499]" />
  );

const Taskbar = () => (
  <div className="h-[56px] pt-[3px] bg-[linear-gradient(90deg,#13262f,#14292f_50%,#142c2e)] flex items-center font-['Open_Sans',sans-serif] text-[#eaeff1] border-t border-[#2b3e45]">
    <div className="w-[528px] shrink-0 flex items-center pl-[23px]">
      <svg width="31" height="30" viewBox="0 0 31 30" className="shrink-0">
        <path d="M12 0Q10 8 2 12Q6 18 16 14Q13 8 12 0Z" fill="#f5a623" />
        <circle cx="17" cy="17" r="8" fill="#b8d4f2" />
        <circle cx="8" cy="22" r="7" fill="#a9c8ee" />
        <circle cx="23" cy="23" r="6.5" fill="#c7dcf6" />
        <rect x="6" y="21" width="20" height="8" rx="4" fill="#bcd4f3" />
      </svg>
      <div className="ml-[8px] flex flex-col text-[14.6px] leading-[20px] -mt-[2px]">
        <span>17°C</span>
        <span>Mostly cloudy</span>
      </div>
    </div>
    <div className="w-[29px] h-[29px] grid grid-cols-2 gap-[2px] shrink-0">
      <div className="bg-[#8fe4fb]" /><div className="bg-[#67d5fb]" /><div className="bg-[#3cc2fb]" /><div className="bg-[#2aaef5]" />
    </div>
    <div className="ml-[17px] w-[274px] h-[40px] rounded-full bg-[#3a4d53] flex items-center pl-[15px] shrink-0">
      <svg width="19" height="20" viewBox="0 0 19 20" fill="none" stroke="#e8eef0" strokeWidth="2"><circle cx="8" cy="8" r="6.5" /><path d="M12.5 13L17 18.5" /></svg>
      <span className="ml-[13px] text-[16px]">Search</span>
      <svg width="46" height="38" viewBox="0 0 46 38" className="ml-auto mr-[12px]">
        <path d="M14 38V20" stroke="#6db04a" strokeWidth="2" />
        <circle cx="14" cy="18" r="6" fill="#a85fd0" />
        <circle cx="5" cy="8" r="4" fill="#9c4dc4" />
        <path d="M5 10L14 18" stroke="#6db04a" strokeWidth="1.5" />
        <path d="M24 27L35 4Q43 10 40 20Q33 31 24 27Z" fill="#e9b92c" />
        <path d="M24 27L21 13Q27 8 33 8Z" fill="#b9a4ea" />
        <path d="M29 21L37 8M32 23L41 14" stroke="#3c2a60" strokeWidth="1.5" />
      </svg>
    </div>
    <svg width="31" height="29" viewBox="0 0 31 29" className="ml-[15px] shrink-0">
      <rect x="0" y="10" width="21" height="19" rx="2" fill="#6b6f71" />
      <rect x="10" y="0" width="21" height="22" rx="2" fill="#f4f4f4" />
      <rect x="10" y="10" width="11" height="12" fill="#bfc2c3" />
    </svg>
    <svg width="28" height="28" viewBox="0 0 28 28" className="ml-[26px] shrink-0">
      <defs>
        <linearGradient id="cp1" x1="0" y1="0" x2="1" y2="1"><stop offset="0" stopColor="#22b8e8" /><stop offset="0.6" stopColor="#5a7be8" /><stop offset="1" stopColor="#ef6b3a" /></linearGradient>
        <linearGradient id="cp2" x1="1" y1="0" x2="0" y2="1"><stop offset="0" stopColor="#c95ad0" /><stop offset="1" stopColor="#f6a03c" /></linearGradient>
      </defs>
      <path d="M9 1H16Q19 1 18 5L14 23Q13 27 9 27H5Q0 27 1 21L4 5Q5 1 9 1Z" fill="url(#cp1)" />
      <path d="M14 27H22Q27 27 27 21V7Q27 2 23 2H17Q20 3 19 7L15 23Q14 26 14 27Z" fill="url(#cp2)" />
      <path d="M10 9H17L15 19H8Z" fill="#14292f" />
    </svg>
    <svg width="30" height="30" viewBox="0 0 30 30" className="ml-[26px] shrink-0">
      <defs>
        <linearGradient id="ed1" x1="0" y1="0" x2="1" y2="1"><stop offset="0" stopColor="#35c1f1" /><stop offset="1" stopColor="#1b5fb8" /></linearGradient>
      </defs>
      <circle cx="15" cy="15" r="15" fill="url(#ed1)" />
      <path d="M2 10Q8 0 19 1Q29 3 29 14Q29 19 23 19Q17 19 17 15Q17 11 13 11Q7 12 5 20Q2 15 2 10Z" fill="#4fd27b" />
      <path d="M8 19Q9 14 14 14Q11 18 15 22Q19 25 26 23Q21 29 14 27Q8 25 8 19Z" fill="#7fd0f5" />
    </svg>
    <div className="ml-[24px] w-[31px] h-[31px] relative shrink-0">
      <div className="absolute left-[4px] top-[9px] w-[27px] h-[22px] rounded-[2px] bg-[#6f7478]" />
      <div className="absolute left-0 top-0 w-[22px] h-[17px] rounded-[2px] bg-[#2ad0e0] flex flex-col items-center justify-end pb-[2px]">
        <div className="w-[14px] h-[2px] bg-white" />
      </div>
    </div>
    <div className="ml-[25px] w-[30px] h-[28px] rounded-[2px] bg-[#3b3f41] relative shrink-0 overflow-hidden">
      <div className="h-[5px] bg-[#6b6f71]" />
      <svg width="30" height="23" viewBox="0 0 30 23" fill="none" stroke="#fff" strokeWidth="2"><path d="M7 4L13 10L7 16M15 17H23" /></svg>
    </div>
    <div className="relative ml-[25px] w-[30px] h-[50px] flex items-center shrink-0">
      <svg width="30" height="28" viewBox="0 0 30 28">
        <path d="M0 2Q0 0 2 0H11L15 4H30V28H0Z" fill="#f7c83e" />
        <rect x="0" y="4" width="30" height="4" fill="#e8a92a" />
        <rect x="9" y="19" width="12" height="9" rx="1" fill="#2b7fd6" />
      </svg>
      <Dot />
    </div>
    <div className="relative ml-[25px] w-[30px] h-[50px] flex items-center shrink-0">
      <svg width="30" height="30" viewBox="0 0 30 30">
        <path d="M15 15L2 8A15 15 0 0 1 28 8Z" fill="#e23f33" />
        <path d="M15 15L28 8A15 15 0 0 1 15 30Z" fill="#f7c32e" />
        <path d="M15 15L15 30A15 15 0 0 1 2 8Z" fill="#2ea44f" />
        <circle cx="15" cy="15" r="7" fill="#fff" />
        <circle cx="15" cy="15" r="5.5" fill="#3b82e8" />
      </svg>
      <div className="absolute -right-[8px] top-0 w-[20px] h-[20px] rounded-full bg-[#7a4fc0] flex items-center justify-center text-[11px] text-[#e8dcf8]">U</div>
      <Dot />
    </div>
    <div className="relative ml-[25px] w-[31px] h-[50px] flex items-center shrink-0">
      <svg width="31" height="30" viewBox="0 0 31 30">
        <path d="M22 0L31 4V26L22 30L8 17L3 21L0 19V11L3 9L8 13ZM22 8L14 15L22 22Z" fill="#1f9cf0" />
      </svg>
      <Dot />
    </div>
    <div className="relative ml-[14px] w-[49px] h-[50px] rounded-[5px] bg-[#2a3d40] border border-[#35494c] flex items-center justify-center shrink-0">
      <div className="w-[28px] h-[34px] bg-[#f5f8fb] flex items-center justify-center mb-[5px]">
        <TableauMark size={25} center="#3b78a8" a="#5f92ba" b="#5f92ba" />
      </div>
      <Dot active />
    </div>
    <div className="relative ml-[19px] w-[24px] h-[50px] flex items-center shrink-0">
      <div className="w-[24px] h-[31px] rounded-[2px] bg-[#33b4d8] flex flex-col items-center gap-[4px] pt-[8px] border-b-[3px] border-[#8b5a2b]">
        <div className="w-[14px] h-[2px] bg-[#14505f]" />
        <div className="w-[14px] h-[2px] bg-[#14505f]" />
        <div className="w-[14px] h-[2px] bg-[#14505f]" />
      </div>
      <Dot />
    </div>
    <svg width="14" height="9" viewBox="0 0 14 9" fill="none" stroke="#fff" strokeWidth="1.6" className="ml-[271px] shrink-0"><path d="M1 8L7 2L13 8" /></svg>
    <svg width="20" height="18" viewBox="0 0 20 18" fill="none" stroke="#fff" strokeWidth="1.5" className="ml-[23px] shrink-0"><path d="M1 6Q10 -2 19 6M4 9.5Q10 4 16 9.5M7 13Q10 10.5 13 13" /><circle cx="10" cy="16" r="1.3" fill="#fff" stroke="none" /></svg>
    <svg width="20" height="20" viewBox="0 0 20 20" fill="none" stroke="#fff" strokeWidth="1.2" className="ml-[9px] shrink-0"><path d="M2 7V13H5L10 17V3L5 7Z" /><path d="M13 6Q15.5 10 13 14M16 4Q19 10 16 16" /></svg>
    <svg width="20" height="22" viewBox="0 0 20 22" fill="none" stroke="#fff" strokeWidth="1.3" className="ml-[12px] shrink-0"><rect x="2" y="6" width="16" height="14" rx="3" /><path d="M10 1V13M7 10L10 14L13 10" strokeWidth="1.8" /></svg>
    <div className="ml-auto flex flex-col items-end text-[14.5px] leading-[21px] text-[#f2f5f6] -mt-[2px]">
      <span>11:25 PM</span>
      <span>6/16/2025</span>
    </div>
    <svg width="18" height="22" viewBox="0 0 18 22" className="ml-[11px] mr-[19px] shrink-0" fill="#eee">
      <path d="M9 1Q14 1 14 7V13L17 17H1L4 13V7Q4 1 9 1Z" />
      <circle cx="9" cy="19.5" r="2" />
      <path d="M6 6H11L7 11H12" stroke="#14292f" strokeWidth="1.2" fill="none" />
    </svg>
  </div>
);

export default function App() {
  return (
    <div className="w-[1911px] h-[1074px] flex flex-col overflow-hidden bg-white">
      <TitleBar />
      <MenuBar />
      <Banner />
      <Toolbar />
      <div className="h-[802px] flex shrink-0 bg-[#f0f0f0]">
        <LeftPanel />
        <Canvas />
      </div>
      <Tabs />
      <StatusBar />
      <Taskbar />
    </div>
  );
}
